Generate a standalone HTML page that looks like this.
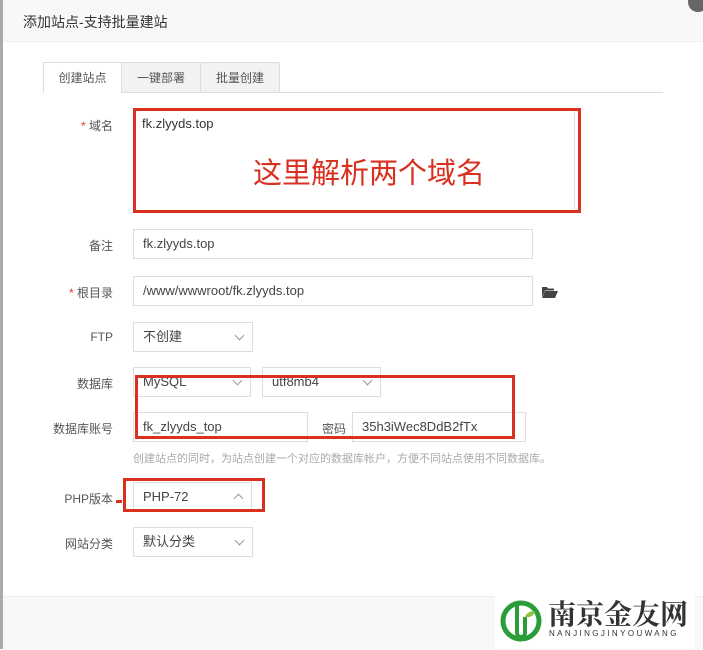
<!DOCTYPE html><html><head><meta charset="utf-8"><style>
body{margin:0;width:703px;height:649px;overflow:hidden;background:#fff;font-family:"Liberation Sans","Noto Sans CJK SC",sans-serif;font-size:12px;color:#555;position:relative}
.a{position:absolute;white-space:nowrap}
.inp{position:absolute;border:1px solid #ddd;box-sizing:border-box;height:30px;line-height:28px;padding-left:9px;color:#444;font-size:13px;background:#fff;white-space:nowrap}
.lab{position:absolute;text-align:right;width:110px;left:3px;font-size:12px;color:#555}
.car{position:absolute;right:9px;top:9px;width:6px;height:6px;border-right:1px solid #999;border-bottom:1px solid #999;transform:rotate(45deg)}
.rb{position:absolute;border:3px solid #d9301f;box-sizing:border-box}
</style></head><body>
<div class="a" style="left:0;top:0;width:3px;height:649px;background:#aaa"></div>
<div class="a" style="left:3px;top:0;width:700px;height:41px;background:#f8f8f8;border-bottom:1px solid #eee"></div>
<div class="a" style="left:23px;top:12px;font-size:14px;color:#333">添加站点-支持批量建站</div>
<div class="a" style="left:688px;top:-8px;width:20px;height:20px;border-radius:50%;background:#666"></div>
<div class="a" style="left:43px;top:92px;width:620px;height:1px;background:#ddd"></div>
<div class="a" style="left:43px;top:62px;width:79px;height:31px;background:#fff;border:1px solid #ddd;border-bottom:none;box-sizing:border-box;text-align:center;line-height:30px;color:#555">创建站点</div>
<div class="a" style="left:122px;top:62px;width:79px;height:31px;background:#f2f2f2;border:1px solid #ddd;border-left:none;box-sizing:border-box;text-align:center;line-height:30px;color:#555">一键部署</div>
<div class="a" style="left:201px;top:62px;width:79px;height:31px;background:#f2f2f2;border:1px solid #ddd;border-left:none;box-sizing:border-box;text-align:center;line-height:30px;color:#555">批量创建</div>
<div class="lab" style="top:117px"><span style="color:#e33">*</span> 域名</div>
<div class="a" style="left:133px;top:108px;width:442px;height:105px;border:1px solid #ddd;box-sizing:border-box"></div>
<div class="rb" style="left:133px;top:108px;width:448px;height:105px"></div>
<div class="a" style="left:142px;top:116px;font-size:13px;color:#333">fk.zlyyds.top</div>
<div class="a" style="left:253px;top:150px;font-size:29px;color:#d9301f">这里解析两个域名</div>
<div class="lab" style="top:237px">备注</div>
<div class="inp" style="left:133px;top:229px;width:400px">fk.zlyyds.top</div>
<div class="lab" style="top:284px"><span style="color:#e33">*</span> 根目录</div>
<div class="inp" style="left:133px;top:276px;width:400px">/www/wwwroot/fk.zlyyds.top</div>
<svg class="a" style="left:542px;top:286px" width="16" height="12" viewBox="0 0 16 12"><path d="M0 1h5l1 1.5h6v2H3L0 11z M3 5h13l-3 7H0z" fill="#444"/></svg>
<div class="lab" style="top:330px">FTP</div>
<div class="inp" style="left:133px;top:322px;width:120px">不创建<div class="car"></div></div>
<div class="lab" style="top:375px">数据库</div>
<div class="inp" style="left:133px;top:367px;width:118px">MySQL<div class="car"></div></div>
<div class="inp" style="left:262px;top:367px;width:119px">utf8mb4<div class="car"></div></div>
<div class="lab" style="top:420px">数据库账号</div>
<div class="inp" style="left:133px;top:412px;width:175px">fk_zlyyds_top</div>
<div class="a" style="left:322px;top:420px;color:#555">密码</div>
<div class="inp" style="left:352px;top:412px;width:174px">35h3iWec8DdB2fTx</div>
<div class="rb" style="left:135px;top:375px;width:380px;height:64px"></div>
<div class="a" style="left:133px;top:450px;font-size:11px;color:#aaa">创建站点的同时，为站点创建一个对应的数据库帐户，方便不同站点使用不同数据库。</div>
<div class="lab" style="top:490px">PHP版本</div>
<div class="a" style="left:116px;top:500px;width:6px;height:3px;background:#d9301f"></div>
<div class="inp" style="left:133px;top:482px;width:119px">PHP-72<div class="car" style="top:12px;transform:rotate(225deg)"></div></div>
<div class="rb" style="left:123px;top:478px;width:142px;height:34px"></div>
<div class="lab" style="top:535px">网站分类</div>
<div class="inp" style="left:133px;top:527px;width:120px">默认分类<div class="car"></div></div>
<div class="a" style="left:3px;top:596px;width:700px;height:53px;background:#f8f8f8;border-top:1px solid #eee"></div>
<div class="a" style="left:495px;top:595px;width:200px;height:54px;background:#fff"></div>
<svg class="a" style="left:499px;top:597px" width="44" height="46" viewBox="0 0 44 46"><circle cx="22" cy="24" r="18" fill="none" stroke="#2a9d3a" stroke-width="5"/><path d="M18 6v30a4 4 0 0 0 8 0V20" fill="none" stroke="#2a9d3a" stroke-width="4"/><path d="M26 20c2-6 8-6 10-6-1 5-5 7-10 6z" fill="#8cc63f"/></svg>
<div class="a" style="left:548px;top:597px;font-size:28px;line-height:32px;font-weight:bold;color:#333;font-family:'Noto Serif CJK SC',serif;letter-spacing:0px">南京金友网</div>
<div class="a" style="left:549px;top:629px;font-size:8px;color:#333;letter-spacing:2.4px">NANJINGJINYOUWANG</div>
</body></html>
